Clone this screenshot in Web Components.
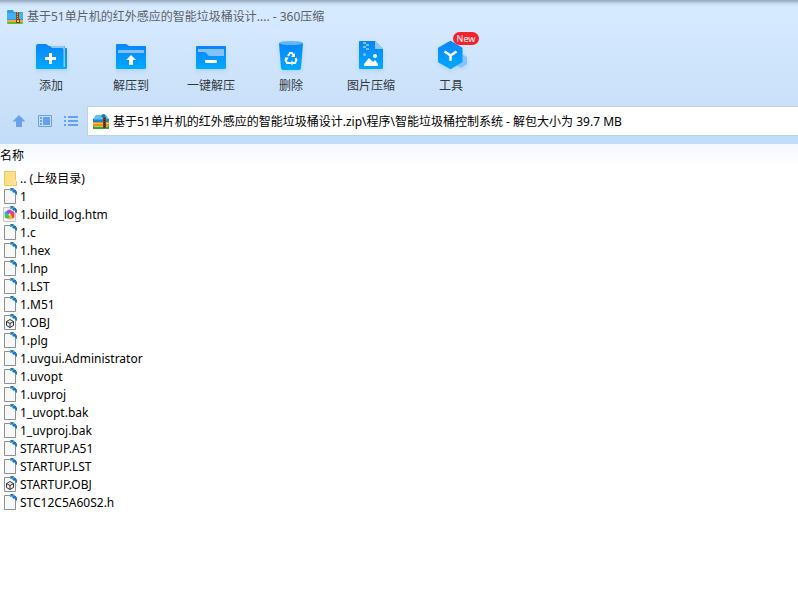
<!DOCTYPE html>
<html lang="zh-CN">
<head>
<meta charset="utf-8">
<title>360压缩</title>
<style>
html, body { margin: 0; min-height: 100%; background: #fff; }
body { font: 12px/18px "Noto Sans", "Noto Sans CJK SC", sans-serif; color: #000; }
</style>
</head>
<body>
<archive-window></archive-window>
<script>
const FOLDER_ARCHIVE = `
<svg width="16" height="14" viewBox="0 0 16 14" aria-hidden="true">
  <path d="M0 1q0-1 1-1h5l1 2h8q1 0 1 1v8H0z" fill="#2d9fe9"/><path d="M0 3h16v6H0z" fill="#45b1f2"/>
  <path d="M0 10h16v2H0z" fill="#f8a63a"/><path d="M0 12h16v1q0 1-1 1H1q-1 0-1-1z" fill="#62b93a"/>
  <path d="M9 2h3v8H9z" fill="#8a4b18"/><path d="M10.500 2v7" stroke="#e3a25a" stroke-dasharray="1 1"/>
  <path d="M9 9h4v4H9z" fill="#7c3f12"/><path d="M10 10h2v2h-2z" fill="#f6c544"/>
</svg>`;
const BOOKS_ARCHIVE = `
<svg width="16" height="15" viewBox="0 0 16 15" aria-hidden="true">
  <path d="M3 1h10l3 4v3H0V5z" fill="#5cc2f0"/><path d="M0 5h16v3H0z" fill="#1b86ca"/><path d="M1 5h8v1H1z" fill="#37a5e2"/>
  <path d="M0 8h16v4H0z" fill="#f28a1c"/><path d="M0 9h16v1H0z" fill="#ffc566"/>
  <path d="M0 12h16v3H0z" fill="#3f9d35"/><path d="M1 12h14v1H1z" fill="#9bd668"/>
  <path d="M10 3h3v11h-3z" fill="#7a3f1b"/><path d="M11.500 4v10" stroke="#32190a" stroke-dasharray="1 1"/>
  <circle cx="10.500" cy="2" r="2" fill="#2b73b5"/>
</svg>`;
const GRAD = `<defs><linearGradient id="g" x1="0" y1="0" x2="0" y2="1"><stop stop-color="#0a84fd"/><stop offset="1" stop-color="#00aafd"/></linearGradient></defs>`;
const TOOL_ICONS = {
  add: `<path d="M7 6h8l3 2h15q1 0 1 1v1h1q1 0 1 1v19q0 1-1 1H6q-1 0-1-1V8q0-2 2-2z" fill="url(#g)"/>
    <path d="M19 8h13q2 0 2 2v19h-1.500V11.500q0-1.500-1.500-1.500H21z" fill="#8ec8ff"/>
    <path d="M19.500 15v11M14 20.500h11" stroke="#fff" stroke-width="3"/>`,
  extract: `<path d="M6 6h9l3 2h16q1 0 1 1v21q0 1-1 1H6q-1 0-1-1V7q0-1 1-1z" fill="url(#g)"/>
    <path d="M7 15v-2q0-1 1-1h24q1 0 1 1v2z" fill="#83c2ff"/>
    <path d="M20 17l5 5h-3v5h-4v-5h-3z" fill="#fff"/>`,
  onekey: `<path d="M6 8h28q1 0 1 1v21q0 1-1 1H6q-1 0-1-1V9q0-1 1-1z" fill="url(#g)"/>
    <path d="M7 11h26v7H19q-2 0-3-2t-3-2H7z" fill="#83c2ff"/>
    <rect x="14" y="22" width="12" height="3" rx="1" fill="#fff"/>`,
  trash: `<path d="M8 5l2 25q0 2 2 2h16q2 0 2-2l2-25z" fill="url(#g)"/>
    <ellipse cx="20" cy="5" rx="12" ry="2" fill="#62b5ff"/>
    <g fill="none" stroke="#fff" stroke-width="2"><path d="M17 18l2-3h2l2 3M24.500 20l1 2-1.500 3h-3M19 25h-3l-1.500-3 1-2"/></g>
    <path d="M24 15v4h-4zM21.500 22.500v5l-3-2.500zM13.500 19.500h4l-1.500 3z" fill="#fff"/>`,
  image: `<path d="M9 3h15l8 8v19q0 1-1 1H9q-1 0-1-1V4q0-1 1-1z" fill="url(#g)"/>
    <path d="M24 3l8 8h-8z" fill="#8ec8ff"/>
    <path d="M12 4h3v2h-3zM15 6h3v2h-3zM12 8h3v2h-3zM15 10h3v2h-3z" fill="#7fc1ff"/><circle cx="13.500" cy="16.500" r="1.500" fill="#7fc1ff"/>
    <circle cx="24" cy="18" r="2" fill="#fff"/><path d="M13 28v-2l5-6 4 4 2-2 3 4v2z" fill="#fff"/>`,
  tools: `<path d="M31 16l5 3v7l-6 4-6-4z" fill="#84c4fb"/>
    <path d="M19 3q.5-.3 1 0l11 6.500q.500.300.500 1v13q0 .700-.500 1L20 31q-.500.300-1 0L7.500 24.500q-.500-.300-.500-1v-13q0-.700.500-1z" fill="url(#g)"/>
    <path d="M19.500 23v-6M19.500 17.500l-6-4M19.500 17.500l6-4" stroke="#fff" stroke-width="2.500" fill="none"/>`
};
const CURL = `<path d="M10 0h4v1h1v1h1v1h1v4h-2V5h-2V4h-1V3h-2z" fill="#5fa6df"/><path d="M11 0h2v2h-2zM13 2h3v2h-3zM15 4h2v2h-2z" fill="#2476c0"/>`;
const PAGE = `<path d="M4.500 1.500h7l4 4v10h-11z" fill="#f6f8fa" stroke="#8f8f8f"/>${CURL}`;
const FILE_ICONS = {
  folder: `<path d="M4.500 1.500h11v9l1 1v4h-12z" fill="#ffe08a" stroke="#eec45c"/><path d="M15 10v5" stroke="#fff0b8"/>`,
  page: PAGE,
  htm: `<path d="M3.500 1.500h9l3 3v11h-12z" fill="#f7f7f9" stroke="#c9c9cd"/>${CURL}
    <circle cx="7" cy="7.500" r="2.500" fill="#2baaf0"/><circle cx="9.500" cy="6" r="2.500" fill="#984be8"/><circle cx="12" cy="7.500" r="2.500" fill="#f0409c"/><circle cx="12" cy="10" r="2.500" fill="#f6472e"/><circle cx="9.500" cy="11" r="2.500" fill="#ffb31c"/><circle cx="7" cy="10" r="2.500" fill="#45c653"/><circle cx="9.500" cy="8.500" r="1" fill="#fff"/>`,
  obj: PAGE + `<path d="M10 5.500l3.500 2v4l-3.500 2-3.500-2v-4z" fill="#eee" stroke="#333"/><path d="M6.500 7.500l3.500 2 3.500-2M10 9.500v4" fill="none" stroke="#333"/>`
};

const define = (name, render) => customElements.define(name, class extends HTMLElement {
  constructor() { super(); this.attachShadow({ mode: 'open' }); }
  connectedCallback() { this.shadowRoot.innerHTML = render(this); }
});

define('title-bar', () => `
<style>
:host { display: flex; align-items: center; gap: 4px; height: 32px; padding: 1px 7px 0; box-sizing: border-box; color: #5c6167;
  background: linear-gradient(#93a5b8, #afc4d9 2px, #cbdff3 4px, transparent 7px); }
h1 { margin: 0; font: inherit; white-space: nowrap; }
svg { display: block; flex: none; }
</style>${FOLDER_ARCHIVE}<h1><slot></slot></h1>`);

define('tool-button', el => `
<style>
:host { display: block; width: 80px; }
button { position: relative; display: flex; flex-direction: column; align-items: center; gap: 3px; width: 100%;
  padding: 6px 0 0; border: 0; background: none; color: #33383e; font: inherit; white-space: nowrap; }
svg { display: block; filter: drop-shadow(0 2px 2px #3b9cf033); }
.badge { position: absolute; left: 42px; top: 0; width: 26px; border-radius: 7px; background: #f5222d;
  color: #fff; font-size: 9px; line-height: 13px; text-align: center; }
</style>
<button type="button">
  <svg width="40" height="36" viewBox="0 0 40 36" aria-hidden="true">${GRAD}${TOOL_ICONS[el.getAttribute('icon')]}</svg>
  <span><slot></slot></span>${el.hasAttribute('badge') ? `<span class="badge">${el.getAttribute('badge')}</span>` : ''}
</button>`);

define('tool-bar', () => `
<style>:host { display: flex; height: 75px; padding-left: 11px; }</style><slot></slot>`);

define('address-bar', el => `
<style>
:host { display: flex; align-items: center; padding: 0 0 9px 12px; }
nav { display: flex; gap: 12px; margin-right: 8px; }
nav button { display: block; padding: 0; border: 0; background: none; }
svg { display: block; flex: none; }
.field { flex: 1; display: flex; align-items: center; gap: 4px; height: 28px; padding-left: 5px; background: #fff; box-shadow: 0 0 0 1px #b9d3ee; }
input { flex: 1; min-width: 0; padding: 2px 0 0; border: 0; outline: 0; background: none; color: #000; font: inherit; }
</style>
<nav aria-label="视图">
  <button type="button" aria-label="上级目录"><svg width="14" height="14" viewBox="0 0 14 14"><path d="M7 1l6.500 6.500H10V13H4V7.500H.5z" fill="#68a0ec"/></svg></button>
  <button type="button" aria-label="大图标"><svg width="14" height="14" viewBox="0 0 14 14"><path d="M.5 1.500h13v11H.5z" fill="none" stroke="#68a0ec"/><path d="M5 3h7v8H5zM2 3h2v2H2zM2 6h2v2H2zM2 9h2v2H2z" fill="#68a0ec"/></svg></button>
  <button type="button" aria-label="列表"><svg width="16" height="14" viewBox="0 0 16 14"><path d="M0 2h2v2H0zM4 2h10v2H4zM0 6h2v2H0zM4 6h10v2H4zM0 10h2v2H0zM4 10h10v2H4z" fill="#68a0ec"/></svg></button>
</nav>
<div class="field">${BOOKS_ARCHIVE}<input type="text" aria-label="路径" value="${el.getAttribute('path')}"></div>`);

define('file-list', () => {
  const names = ['.. (上级目录)', '1', '1.build_log.htm', '1.c', '1.hex', '1.lnp', '1.LST', '1.M51', '1.OBJ', '1.plg',
    '1.uvgui.Administrator', '1.uvopt', '1.uvproj', '1_uvopt.bak', '1_uvproj.bak', 'STARTUP.A51', 'STARTUP.LST', 'STARTUP.OBJ', 'STC12C5A60S2.h'];
  const kind = n => n.startsWith('..') ? 'folder' : n.endsWith('.htm') ? 'htm' : n.endsWith('.OBJ') ? 'obj' : 'page';
  return `
<style>
:host { display: block; background: linear-gradient(#f3f9ff, #fff 24px); }
table { width: 100%; border-collapse: collapse; }
th { padding: 3px 0 5px; font-weight: 400; text-align: left; line-height: 18px; }
td { padding: 0; }
.name { display: flex; align-items: center; gap: 2px; height: 18px; white-space: nowrap; }
svg { display: block; flex: none; }
</style>
<table><thead><tr><th scope="col">名称</th></tr></thead><tbody>${names.map(n => `
<tr><td><div class="name"><svg width="18" height="18" viewBox="0 0 18 18" aria-hidden="true">${FILE_ICONS[kind(n)]}</svg><span>${n}</span></div></td></tr>`).join('')}
</tbody></table>`;
});

define('archive-window', () => `
<style>
:host { display: block; }
header { background: linear-gradient(#d6eaff, #d4e9ff 24px, #c9e0f8 106px, #c2ddf8); }
</style>
<header>
  <title-bar>基于51单片机的红外感应的智能垃圾桶设计.... - 360压缩</title-bar>
  <tool-bar>
    <tool-button icon="add">添加</tool-button>
    <tool-button icon="extract">解压到</tool-button>
    <tool-button icon="onekey">一键解压</tool-button>
    <tool-button icon="trash">删除</tool-button>
    <tool-button icon="image">图片压缩</tool-button>
    <tool-button icon="tools" badge="New">工具</tool-button>
  </tool-bar>
  <address-bar path="基于51单片机的红外感应的智能垃圾桶设计.zip\\程序\\智能垃圾桶控制系统 - 解包大小为 39.7 MB"></address-bar>
</header>
<file-list></file-list>`);
</script>
</body>
</html>
